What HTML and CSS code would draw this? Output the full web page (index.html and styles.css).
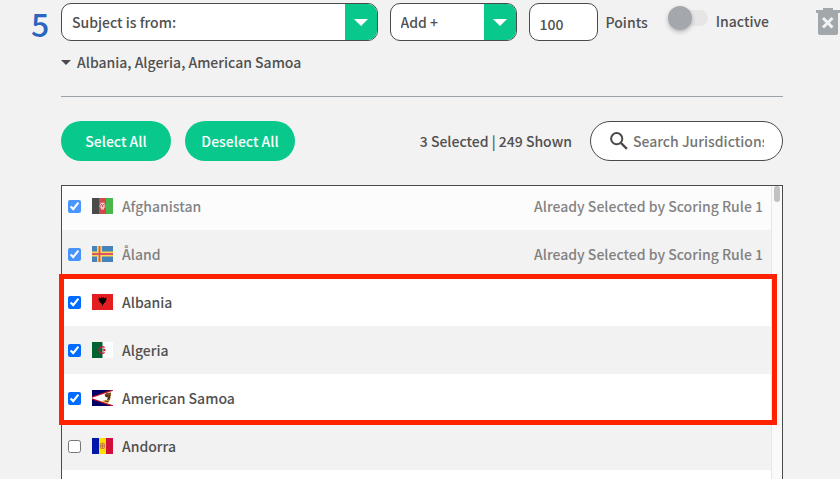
FILE: index.html
```html
<!DOCTYPE html>
<html lang="en">
<head>
  <meta charset="UTF-8" />
  <title>Scoring Rules</title>
  <meta name="viewport" content="width=device-width, initial-scale=1.0" />
  <link rel="stylesheet" href="styles.css">
</head>
<body>
  <div class="rule">
    <div class="rule-number">5</div>

    <div class="rule-body">
      <div class="controls">
        <div class="select-box subject">
          <select aria-label="Subject">
            <option>Subject is from:</option>
          </select>
          <span class="arrow"><svg width="14" height="7" viewBox="0 0 14 7"><path d="M0 0h14L7 7z" fill="#fff"/></svg></span>
        </div>
        <div class="select-box operation">
          <select aria-label="Operation">
            <option>Add +</option>
          </select>
          <span class="arrow"><svg width="14" height="7" viewBox="0 0 14 7"><path d="M0 0h14L7 7z" fill="#fff"/></svg></span>
        </div>
        <input type="text" id="points" class="points" value="100" />
        <label for="points" class="points-label">Points</label>
        <input type="checkbox" id="active" class="toggle" />
        <label for="active" class="toggle-label">Inactive</label>
      </div>

      <button type="button" class="summary">
        <svg width="10" height="5" viewBox="0 0 10 5"><path d="M0 0h10L5 5z" fill="#4a4a4a"/></svg>
        Albania, Algeria, American Samoa
      </button>

      <div class="toolbar">
        <button type="button" class="pill">Select All</button>
        <button type="button" class="pill">Deselect All</button>
        <span class="count">3 Selected | 249 Shown</span>
        <div class="search">
          <svg width="18" height="18" viewBox="0 0 18 18" fill="none" stroke="#4a4a4a"><circle cx="6.7" cy="6.7" r="5.6" stroke-width="2"/><path d="M10.9 10.9l6 6" stroke-width="2.3"/></svg>
          <input type="text" placeholder="Search Jurisdictions" aria-label="Search Jurisdictions" />
        </div>
      </div>

      <div class="panel">
        <div class="list">
          <div class="row taken">
            <input type="checkbox" id="af" checked />
            <svg class="flag" viewBox="0 0 21 16"><path d="M0 0h7v16H0z" fill="#000"/><path d="M7 0h7v16H7z" fill="#bf0000"/><path d="M14 0h7v16h-7z" fill="#009a00"/><g fill="none" stroke="#fff" stroke-width=".8"><circle cx="10.5" cy="8" r="2.5" stroke-dasharray="1.6 .6"/><path d="M9.3 9.5V7.6l1.2-1 1.2 1v1.9zM8.5 5.2h4M9 11h3"/></g></svg>
            <label for="af">Afghanistan</label>
            <span class="note">Already Selected by Scoring Rule 1</span>
          </div>
          <div class="row taken">
            <input type="checkbox" id="ax" checked />
            <svg class="flag" viewBox="0 0 21 16"><path d="M0 0h21v16H0z" fill="#0053a5"/><path d="M5 0h5v16H5zM0 5.5h21v5H0z" fill="#ffce00"/><path d="M6.6 0h1.8v16H6.6zM0 7.1h21v1.8H0z" fill="#d21034"/></svg>
            <label for="ax">Åland</label>
            <span class="note">Already Selected by Scoring Rule 1</span>
          </div>
          <div class="selected-group">
            <div class="row">
              <input type="checkbox" id="al" checked />
              <svg class="flag" viewBox="0 0 21 16"><path d="M0 0h21v16H0z" fill="#e41e20"/><path d="M9 2.8l1 .5.5 1 .5-1 1-.5v1.4l2.6-.6-.8 1.5 1.2.4-1.4 1 .8.9-1.7.4.5 1.3-1.4-.3.3 1.5-1-.4-.6 2.9-.6-2.9-1 .4.3-1.5-1.4.3.5-1.3-1.7-.4.8-.9-1.4-1 1.200-.4-.8-1.500 2.600.6z"/></svg>
              <label for="al">Albania</label>
            </div>
            <div class="row">
              <input type="checkbox" id="dz" checked />
              <svg class="flag" viewBox="0 0 21 16"><path d="M0 0h21v16H0z" fill="#fff"/><path d="M0 0h10.5v16H0z" fill="#006233"/><path d="M12.6 5.5a3.3 3.3 0 1 0 0 5" fill="none" stroke="#d21034" stroke-width="1.2"/><path d="M9.9 8l1.5-.5.1-1.6.9 1.2 1.5-.4-.8 1.3.8 1.3-1.5-.4-.9 1.2-.1-1.6z" fill="#d21034"/></svg>
              <label for="dz">Algeria</label>
            </div>
            <div class="row">
              <input type="checkbox" id="as" checked />
              <svg class="flag" viewBox="0 0 21 16"><path d="M0 0h21v16H0z" fill="#000066"/><path d="M-4 8L21-.8v17.600z" fill="#bd1021"/><path d="M-1 8L21 .7v14.600z" fill="#fff"/><path d="M12.6 4.800l2-1.800 4.600-.4-.5 3.200-.6 3.800-1.400 1.400-2.100-.6 1.200-2.600-2.500-1z" fill="#7b4a1d"/><path d="M11 10.600l3.400-.8 3.200 1.200-1.400 1.800-2.600-.2-2.400-1z" fill="#cda23a"/><path d="M13.4 5.200l2 .3-.8 1.400M16.200 9l1.800-3.800M13.200 11.200l3 .4" fill="none" stroke="#2b1a0c" stroke-width=".8"/></svg>
              <label for="as">American Samoa</label>
            </div>
          </div>
          <div class="row">
            <input type="checkbox" id="ad" />
            <svg class="flag" viewBox="0 0 21 16"><path d="M0 0h7v16H0z" fill="#0018a8"/><path d="M7 0h7v16H7z" fill="#fedf00"/><path d="M14 0h7v16h-7z" fill="#d0103a"/><rect x="8.4" y="5.3" width="4.2" height="5.2" rx="1" fill="#e8b35b" stroke="#b87a35" stroke-width=".8"/><path d="M10.5 5.3v5.2M8.4 7.9h4.2" stroke="#c7632f" stroke-width=".7"/></svg>
            <label for="ad">Andorra</label>
          </div>
        </div>
        <div class="scrollbar"><div class="thumb"></div></div>
      </div>
    </div>

    <button type="button" class="delete" aria-label="Delete rule">
      <svg width="24" height="27" viewBox="0 0 24 27"><path d="M7 0h10v2h7v3h-2v20a2 2 0 0 1-2 2H4a2 2 0 0 1-2-2V5H0V2h7z" fill="#a2a7ab"/><path d="M7 10l9.5 9.5M16.5 10L7 19.5" stroke="#f2f2f2" stroke-width="3"/></svg>
    </button>
  </div>
</body>
</html>
```

FILE: styles.css
```css
* { box-sizing: border-box; }
body { margin: 0; background: #f2f2f2; color: #505050; overflow: hidden; }
body, button, input, select { font-family: "Noto Sans CJK SC", "Noto Sans", sans-serif; font-size: 14px; font-weight: 500; line-height: 20px; }
button, input, select { color: inherit; margin: 0; }
button { border: 0; padding: 0; background: none; cursor: pointer; }
svg { display: block; flex: none; }

.rule { display: flex; height: 100vh; padding: 3px 0 0 31px; }
.rule-number { width: 30px; font-size: 32px; line-height: 40px; color: #2a66bd; }
.rule-body { flex: 1; display: flex; flex-direction: column; min-width: 0; }
.delete { align-self: flex-start; margin: 5px 0 0 33px; }

.controls { display: flex; align-items: center; height: 38px; padding-right: 14px; }
.select-box { display: flex; height: 38px; margin-right: 12px; border: 1px solid #4a4a4a; border-radius: 10px; background: #fff; overflow: hidden; position: relative; }
.select-box select { appearance: none; width: 100%; border: 0; padding: 0 42px 0 10px; background: none; outline: none; }
.subject { flex: 1; }
.operation { width: 127px; }
.arrow { position: absolute; top: 0; right: 0; bottom: 0; width: 32px; display: flex; align-items: center; justify-content: center; background: #08c88c; pointer-events: none; }
.points { width: 69px; height: 38px; padding: 3px 10px 0; border: 1px solid #4a4a4a; border-radius: 10px; background: #fff; }
.points-label { margin: 0 20px 0 8px; }

.toggle { appearance: none; display: flex; align-items: center; align-self: flex-start; width: 40px; height: 16px; margin: 7px 8px 0 0; border-radius: 8px; background: #e6e6e6; }
.toggle::before { content: ""; width: 24px; height: 24px; border-radius: 50%; background: #a4a8ad; box-shadow: 0 2px 4px rgba(0, 0, 0, 0.25); flex: none; }
.toggle:checked { justify-content: flex-end; }
.toggle-label { padding-bottom: 3px; }

.summary { display: flex; align-items: center; gap: 6px; height: 20px; margin: 11px 0 24px; align-self: flex-start; }

.toolbar { display: flex; align-items: center; border-top: 1px solid #9ba3a9; padding: 24px 0; }
.pill { width: 110px; height: 40px; margin-right: 14px; border-radius: 20px; background: #08c88c; color: #fff; }
.count { margin: 0 18px 0 auto; }
.search { display: flex; align-items: center; gap: 5px; width: 193px; height: 40px; padding: 0 18px 0 19px; border: 1px solid #4a4a4a; border-radius: 20px; background: #fff; }
.search input { flex: 1; min-width: 0; border: 0; padding: 0; background: none; outline: none; }
.search input::placeholder { color: #757575; }

.panel { flex: 1; display: flex; border: 1px solid #4a4a4a; border-bottom: 0; background: #fff; }
.list { flex: 1; }
.row { display: flex; align-items: center; height: 48px; padding: 0 8px 0 6px; background: #fff; }
.row input { width: 13px; height: 13px; margin-right: 11px; accent-color: #006bff; }
.row.taken > * { opacity: 0.7; }
.list > .row:first-child { height: 44px; padding-bottom: 4px; background: #fcfcfc; }
.list > .row:nth-child(even), .selected-group .row:nth-child(even) { background: #f2f2f2; }
.flag { width: 21px; height: 16px; margin-right: 9px; }
.note { margin-left: auto; }

.selected-group { position: relative; }
.selected-group::after { content: ""; position: absolute; inset: -4px -6px -3px -3px; border: 5px solid #ff2200; pointer-events: none; z-index: 1; }

.scrollbar { width: 11px; padding: 0 2px; border-left: 1px solid #e6e6e6; background: #fafafa; }
.thumb { width: 6px; height: 16px; border-radius: 3px; background: #c1c1c1; }
```
